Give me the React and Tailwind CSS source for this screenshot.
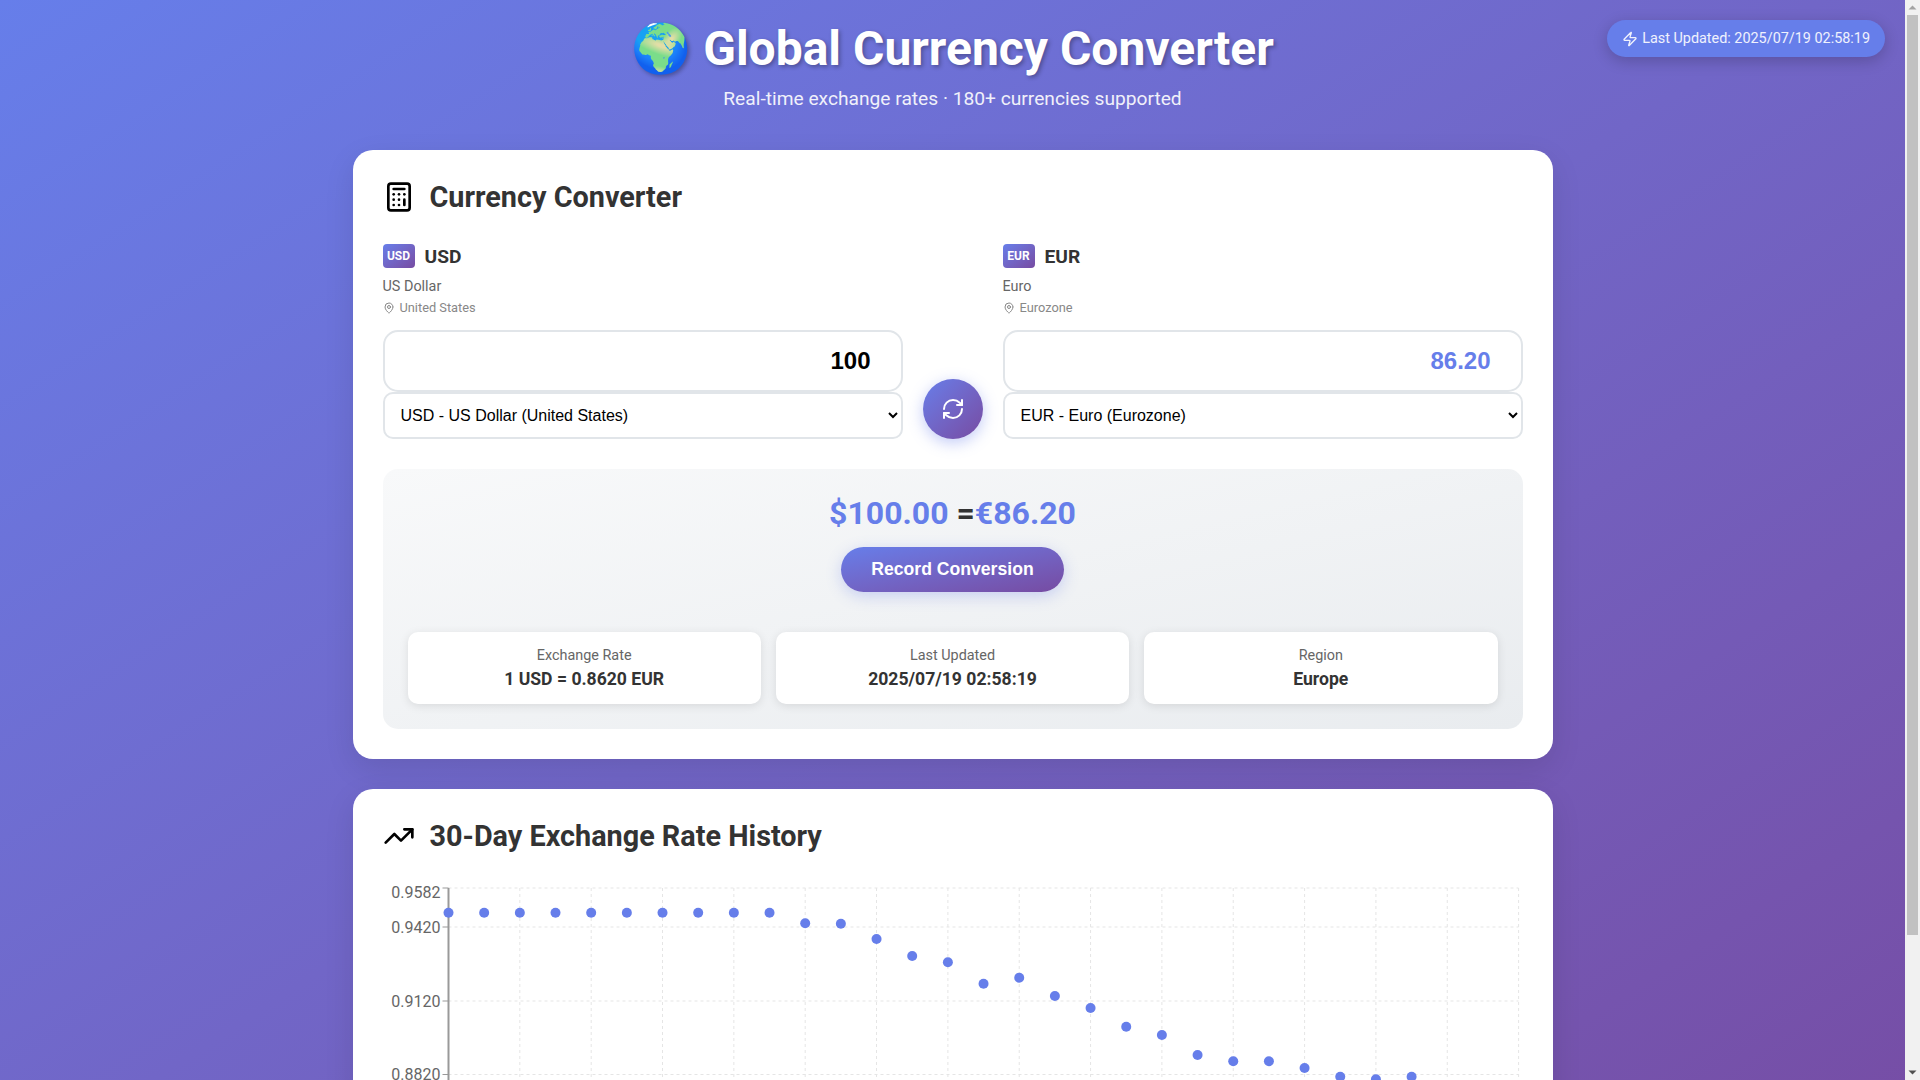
import { Calculator, MapPin, RefreshCw, TrendingUp, Zap } from 'lucide-react';

// dot heights read off the plot, one every 35.67px
const DOT_Y = [
  912.7, 912.7, 912.7, 912.7, 912.7, 912.7, 912.7, 912.7, 912.7, 912.7, 923.3, 923.7,
  939, 956, 962.3, 983.7, 977.7, 996, 1008, 1026.7, 1035, 1055, 1061.3, 1061.3, 1068,
  1076.7, 1079.3, 1076.7, 1090, 1098, 1105,
];

const TICKS = [
  { label: '0.9582', y: 5, textY: 9 },
  { label: '0.9420', y: 44, textY: 44 },
  { label: '0.9120', y: 118, textY: 118 },
  { label: '0.8820', y: 191.5, textY: 191.5 },
  { label: '0.8520', y: 265, textY: 265 },
];

const DATES = ['06/19', '06/23', '06/27', '07/01', '07/05', '07/09', '07/13', '07/17'];

const LEFT = 65.5;
const STEP = 35.67;

function CurrencyInfo({ code, name, region }) {
  return (
    <div className="mb-[15px]">
      <div className="flex items-center gap-[10px]">
        <span className="flex h-6 w-8 items-center justify-center rounded bg-gradient-to-br from-[#667eea] to-[#764ba2] text-[12px] font-bold text-white">
          {code}
        </span>
        <span className="text-[19.2px] font-bold text-[#333]">{code}</span>
      </div>
      <div className="mt-[10px] text-[14.4px] text-[#666]">{name}</div>
      <div className="mt-[5px] flex items-center gap-[5px] text-[12.8px] text-[#888]">
        <MapPin size={12} />
        {region}
      </div>
    </div>
  );
}

function CurrencyColumn({ code, name, region, value, valueClass, option }) {
  return (
    <div>
      <CurrencyInfo code={code} name={name} region={region} />
      <input
        type="text"
        readOnly
        value={value}
        className={`block w-full rounded-[15px] border-2 border-[#e1e5e9] px-[30px] py-[15px] text-right font-['Liberation_Sans',sans-serif] text-[24px] font-bold outline-none ${valueClass}`}
      />
      <select className="block w-full rounded-[10px] border-2 border-[#e1e5e9] bg-white py-3 pl-3 pr-[15px] font-['Liberation_Sans',sans-serif] text-[16px] text-black">
        <option>{option}</option>
      </select>
    </div>
  );
}

function Stat({ label, value }) {
  return (
    <div className="rounded-[10px] bg-white p-[15px] text-center shadow-[0_2px_10px_rgba(0,0,0,0.1)]">
      <div className="mb-[5px] text-[14.4px] text-[#666]">{label}</div>
      <div className="text-[17.6px] font-bold text-[#333]">{value}</div>
    </div>
  );
}

function RateChart() {
  return (
    <svg width="1140" height="300" className="block">
      <g stroke="#e5e5e5" strokeDasharray="3 3">
        {TICKS.map((t) => (
          <line key={t.label} x1={LEFT} x2="1135.5" y1={t.y} y2={t.y} />
        ))}
        {Array.from({ length: 16 }, (_, i) => (
          <line key={i} x1={LEFT + i * 2 * STEP} x2={LEFT + i * 2 * STEP} y1="5" y2="265" />
        ))}
      </g>
      <line x1={LEFT} x2={LEFT} y1="5" y2="265" stroke="#999" strokeWidth="2" />
      <line x1={LEFT} x2="1135.5" y1="265" y2="265" stroke="#999" />
      {TICKS.map((t) => (
        <g key={t.label}>
          <line x1={LEFT - 6} x2={LEFT} y1={t.y} y2={t.y} stroke="#999" />
          <text x={LEFT - 8} y={t.textY + 5.7} textAnchor="end" fontSize="16" fill="#666">
            {t.label}
          </text>
        </g>
      ))}
      {DATES.map((d, i) => (
        <text key={d} x={LEFT + i * 4 * STEP + 40} y="287" textAnchor="middle" fontSize="16" fill="#666">
          {d}
        </text>
      ))}
      {DOT_Y.map((y, i) => (
        <circle key={i} cx={LEFT + i * STEP} cy={y - 883} r="5" fill="#667eea" />
      ))}
    </svg>
  );
}

function ScrollRail() {
  return (
    <div className="flex h-screen w-[15px] shrink-0 flex-col bg-[#f1f1f1]">
      <svg width="15" height="15" className="block shrink-0">
        <polygon points="3.5,9.5 11.5,9.5 7.5,5.5" fill="#a3a3a3" />
      </svg>
      <div className="ml-[2px] h-[920px] w-[11px] bg-[#c1c1c1]" />
      <div className="flex-1" />
      <svg width="15" height="15" className="block shrink-0">
        <polygon points="3.5,5.5 11.5,5.5 7.5,9.5" fill="#505050" />
      </svg>
    </div>
  );
}

export default function App() {
  return (
    <div className="flex h-screen overflow-hidden font-['Roboto',sans-serif] leading-[normal]">
      <div className="h-screen min-w-0 flex-1 overflow-y-auto">
        <div className="relative bg-gradient-to-br from-[#667eea] to-[#764ba2] p-5">
          <div className="absolute right-5 top-5 flex items-center gap-1 rounded-[25px] bg-[#667eea] px-[15px] py-[10px] text-[14.4px] text-white/90 shadow-[0_4px_15px_rgba(0,0,0,0.2)]">
            <Zap size={16} />
            Last Updated: 2025/07/19 02:58:19
          </div>

          <header className="mb-10 text-center text-white">
            <h1 className="mb-[10px] text-[48px] font-bold [text-shadow:2px_2px_4px_rgba(0,0,0,0.3)]">
              🌍 Global Currency Converter
            </h1>
            <p className="text-[19.2px] opacity-90">Real-time exchange rates · 180+ currencies supported</p>
          </header>

          <main className="mx-auto w-full max-w-[1200px]">
            <section className="mb-[30px] rounded-[20px] bg-white p-[30px] shadow-[0_10px_30px_rgba(0,0,0,0.1)]">
              <div className="mb-[30px] flex items-center gap-[15px]">
                <Calculator size={32} />
                <h2 className="text-[28.8px] font-bold text-[#333]">Currency Converter</h2>
              </div>

              <div className="mb-[30px] grid grid-cols-[1fr_auto_1fr] items-end gap-5">
                <CurrencyColumn
                  code="USD"
                  name="US Dollar"
                  region="United States"
                  value="100"
                  valueClass="text-black"
                  option="USD - US Dollar (United States)"
                />
                <button className="flex h-[60px] w-[60px] items-center justify-center rounded-full bg-gradient-to-br from-[#667eea] to-[#764ba2] text-white shadow-[0_4px_15px_rgba(102,126,234,0.4)]">
                  <RefreshCw size={24} />
                </button>
                <CurrencyColumn
                  code="EUR"
                  name="Euro"
                  region="Eurozone"
                  value="86.20"
                  valueClass="text-[#667eea]"
                  option="EUR - Euro (Eurozone)"
                />
              </div>

              <div className="rounded-[15px] bg-gradient-to-br from-[#f8f9fa] to-[#e9ecef] p-[25px] text-center">
                <div className="mb-[15px] text-[32px] font-bold text-[#333]">
                  <span className="text-[#667eea]">$100.00</span> =<span className="text-[#667eea]">€86.20</span>
                </div>
                <button className="rounded-[25px] bg-gradient-to-br from-[#667eea] to-[#764ba2] px-[30px] py-3 font-['Liberation_Sans',sans-serif] text-[17.6px] font-bold text-white shadow-[0_4px_15px_rgba(102,126,234,0.3)]">
                  Record Conversion
                </button>
                <div className="mt-10 grid grid-cols-3 gap-[15px]">
                  <Stat label="Exchange Rate" value="1 USD = 0.8620 EUR" />
                  <Stat label="Last Updated" value="2025/07/19 02:58:19" />
                  <Stat label="Region" value="Europe" />
                </div>
              </div>
            </section>

            <section className="rounded-[20px] bg-white p-[30px] shadow-[0_10px_30px_rgba(0,0,0,0.1)]">
              <div className="mb-[30px] flex items-center gap-[15px]">
                <TrendingUp size={32} />
                <h2 className="text-[28.8px] font-bold text-[#333]">30-Day Exchange Rate History</h2>
              </div>
              <RateChart />
            </section>
          </main>
        </div>
      </div>
      <ScrollRail />
    </div>
  );
}
